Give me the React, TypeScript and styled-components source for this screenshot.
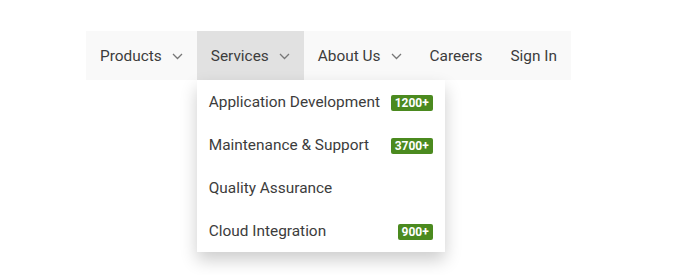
import styled, { createGlobalStyle } from "styled-components";

const GlobalStyle = createGlobalStyle`
  body {
    margin: 0;
    background: #ffffff;
    font-family: Roboto, "Liberation Sans", sans-serif;
  }
`;

const Page = styled.div`
  padding: 31px 0 0 86px;
  height: 275px;
  box-sizing: border-box;
`;

const NavBar = styled.ul`
  display: inline-flex;
  list-style: none;
  margin: 0;
  padding: 0;
  background: #f9f9f9;
`;

const NavItem = styled.li<{ $active?: boolean }>`
  position: relative;
  display: flex;
  align-items: center;
  gap: 10px;
  height: 49px;
  padding: 0 14px;
  font-size: 15.4px;
  color: #3c3c3c;
  background: ${(p) => (p.$active ? "#e1e1e1" : "transparent")};
  cursor: pointer;
`;

const Chevron = styled.svg`
  width: 11px;
  height: 7px;
  margin-top: 1px;
`;

const Dropdown = styled.ul`
  position: absolute;
  top: 49px;
  left: 0;
  width: 248px;
  margin: 0;
  padding: 0;
  list-style: none;
  background: #ffffff;
  box-shadow: 0 8px 16px rgba(0, 0, 0, 0.2);
  z-index: 2;
`;

const DropItem = styled.li`
  display: flex;
  align-items: center;
  justify-content: space-between;
  height: 43px;
  padding: 0 12px;
  font-size: 15.4px;
  color: #3c3c3c;
  white-space: nowrap;
`;

const Badge = styled.span`
  display: inline-block;
  padding: 1px 4px;
  margin-top: 3px;
  border-radius: 2px;
  background: #4b8a1f;
  color: #ffffff;
  font-size: 12px;
  font-weight: 700;
  line-height: 14px;
`;

const ChevronDown = () => (
  <Chevron viewBox="0 0 11 7">
    <path d="M1 1 L5.5 5.5 L10 1" fill="none" stroke="#777" strokeWidth="1.3" />
  </Chevron>
);

const services = [
  { label: "Application Development", count: "1200+" },
  { label: "Maintenance & Support", count: "3700+" },
  { label: "Quality Assurance", count: "" },
  { label: "Cloud Integration", count: "900+" },
];

const App = () => {
  return (
    <Page>
      <GlobalStyle />
      <NavBar>
        <NavItem>
          Products <ChevronDown />
        </NavItem>
        <NavItem $active>
          Services <ChevronDown />
          <Dropdown>
            {services.map((s) => (
              <DropItem key={s.label}>
                {s.label}
                {s.count && <Badge>{s.count}</Badge>}
              </DropItem>
            ))}
          </Dropdown>
        </NavItem>
        <NavItem>
          About Us <ChevronDown />
        </NavItem>
        <NavItem>Careers</NavItem>
        <NavItem>Sign In</NavItem>
      </NavBar>
    </Page>
  );
};

export default App;
